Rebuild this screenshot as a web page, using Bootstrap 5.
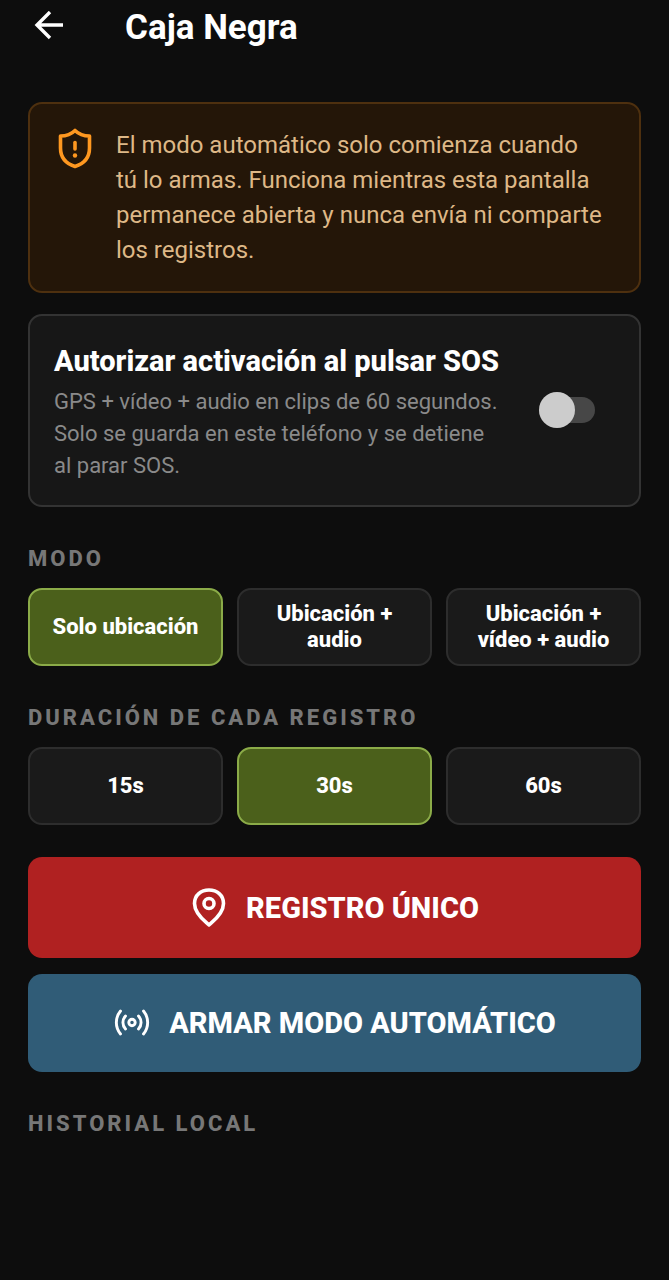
<!DOCTYPE html>
<html lang="es" data-bs-theme="dark">
<head>
<meta charset="utf-8">
<meta name="viewport" content="width=device-width, initial-scale=1">
<title>Caja Negra</title>
<link href="https://cdn.jsdelivr.net/npm/bootstrap@5.3.0/dist/css/bootstrap.min.css" rel="stylesheet">
<style>
  body { background: #0d0d0d; color: #fff; font-family: Roboto, "Liberation Sans", sans-serif; }
  .screen { padding: 0 28px 28px; }
  .topbar { height: 52px; gap: 55px; }
  .back { width: 42px; height: 42px; }
  .topbar h1 { font-size: 35px; line-height: 42px; padding-top: 3px; }
  .heavy { font-weight: 800; }
  .panel { border: 2px solid #333; border-radius: 14px; background: #171717; }
  .notice { background: #241608; border-color: #4e300f; color: #deb887; padding: 24px 26px 23px; gap: 22px; margin-top: 50px; font-size: 24px; line-height: 35px; }
  .sos { padding: 27px 24px 23px; margin-top: 21px; }
  .sos-title { font-size: 29px; line-height: 36px; }
  .sos-text { color: #8a8a8a; font-size: 22px; line-height: 32px; margin-top: 7px; }
  .form-check-input.toggle { width: 56px; height: 26px; margin: 0 20px 6px 0; border: 0; border-radius: 13px; background: #474747; appearance: none; position: relative; }
  .toggle::before { content: ""; position: absolute; left: 0; top: -5px; width: 36px; height: 36px; border-radius: 50%; background: #ccc; }
  .toggle:checked::before { left: auto; right: 0; }
  .group { margin-top: 38px; }
  .section-title { color: #777; font-size: 22px; line-height: 28px; letter-spacing: 3px; margin: 0 0 15px; }
  .options { gap: 14px; }
  .option { flex: 1 1 0; min-height: 78px; padding: 8px 20px; border: 2px solid #2d2d2d; border-radius: 14px; background: #1a1a1a; color: #fff; font-size: 22px; line-height: 26px; }
  .btn-check:checked + .option { background: #4b601b; border-color: #8bab48; color: #fff; }
  .actions { margin-top: 32px; }
  .action { border: 0; border-radius: 14px; color: #fff; font-size: 29px; line-height: 36px; padding: 31px 20px; gap: 18px; }
  .action-red, .action-red:hover { background: #b02121; color: #fff; }
  .action-blue, .action-blue:hover { background: #305c77; color: #fff; }
</style>
</head>
<body>
<div class="screen">
  <header class="topbar d-flex align-items-center">
    <button class="back btn p-0 border-0 d-flex align-items-center justify-content-center" type="button" aria-label="Volver">
      <svg width="30" height="30" viewBox="0 0 30 30" fill="none" stroke="#fff" stroke-width="3.400" aria-hidden="true"><path d="M29 14H3M16 1 3 14l13 13"/></svg>
    </button>
    <h1 class="fw-bold mb-0">Caja Negra</h1>
  </header>

  <main>
    <div class="panel notice d-flex align-items-start">
      <svg class="flex-shrink-0" width="38" height="44" viewBox="0 1 38 44" fill="none" stroke="#ff9820" stroke-width="3.600" stroke-linecap="round" stroke-linejoin="round" aria-hidden="true"><path d="M19 3.500C15 7.500 9.500 9 4.500 9V21C4.500 30.500 9.500 36.500 19 39.500C28.500 36.500 33.500 30.500 33.500 21V9C28.500 9 23 7.500 19 3.500Z"/><path d="M19 15.500v6.500"/><circle cx="19" cy="28.500" r="2.200" fill="#ff9820" stroke="none"/></svg>
      <p class="mb-0">El modo automático solo comienza cuando tú&nbsp;lo armas. Funciona mientras esta pantalla permanece abierta y nunca envía ni comparte los registros.</p>
    </div>

    <div class="panel sos d-flex align-items-center justify-content-between gap-4">
      <div>
        <label class="sos-title heavy d-block" for="sos">Autorizar activación al pulsar SOS</label>
        <p class="sos-text mb-0" id="sosText">GPS + vídeo + audio en clips de 60 segundos. Solo se guarda en este teléfono y se detiene al&nbsp;parar SOS.</p>
      </div>
      <input class="form-check-input toggle flex-shrink-0" type="checkbox" role="switch" id="sos" aria-describedby="sosText">
    </div>

    <section class="group" aria-labelledby="modo">
      <h2 class="section-title heavy" id="modo">MODO</h2>
      <div class="options d-flex" role="radiogroup" aria-labelledby="modo">
        <input class="btn-check" type="radio" name="modo" id="m1" checked>
        <label class="option btn heavy d-flex align-items-center justify-content-center" for="m1">Solo ubicación</label>
        <input class="btn-check" type="radio" name="modo" id="m2">
        <label class="option btn heavy d-flex align-items-center justify-content-center" for="m2">Ubicación + audio</label>
        <input class="btn-check" type="radio" name="modo" id="m3">
        <label class="option btn heavy d-flex align-items-center justify-content-center" for="m3">Ubicación + vídeo + audio</label>
      </div>
    </section>

    <section class="group" aria-labelledby="dur">
      <h2 class="section-title heavy" id="dur">DURACIÓN DE CADA REGISTRO</h2>
      <div class="options d-flex" role="radiogroup" aria-labelledby="dur">
        <input class="btn-check" type="radio" name="dur" id="d1">
        <label class="option btn heavy d-flex align-items-center justify-content-center" for="d1">15s</label>
        <input class="btn-check" type="radio" name="dur" id="d2" checked>
        <label class="option btn heavy d-flex align-items-center justify-content-center" for="d2">30s</label>
        <input class="btn-check" type="radio" name="dur" id="d3">
        <label class="option btn heavy d-flex align-items-center justify-content-center" for="d3">60s</label>
      </div>
    </section>

    <div class="actions d-grid gap-3">
      <button class="action action-red btn heavy d-flex align-items-center justify-content-center" type="button">
        <svg width="38" height="39" viewBox="0 0 38 39" fill="none" stroke="#fff" stroke-width="3.600" stroke-linejoin="round" aria-hidden="true"><path d="M19 37C15 33.500 4.500 26 4.500 15.500C4.500 7 11 2 19 2S33.500 7 33.500 15.500C33.500 26 23 33.500 19 37Z"/><circle cx="19" cy="15.500" r="5"/></svg>
        REGISTRO ÚNICO
      </button>
      <button class="action action-blue btn heavy d-flex align-items-center justify-content-center" type="button">
        <svg width="38" height="30" viewBox="0 0 38 30" fill="none" stroke="#fff" stroke-width="2.900" stroke-linecap="round" aria-hidden="true"><circle cx="19" cy="14.500" r="3.200"/><path d="M12.500 8a9.500 9.500 0 0 0 0 13M25.500 8a9.500 9.500 0 0 1 0 13M7.500 3a18 18 0 0 0 0 23M30.500 3a18 18 0 0 1 0 23"/></svg>
        ARMAR MODO AUTOMÁTICO
      </button>
    </div>

    <section class="group">
      <h2 class="section-title heavy">HISTORIAL LOCAL</h2>
    </section>
  </main>
</div>
<script src="https://cdn.jsdelivr.net/npm/bootstrap@5.3.0/dist/js/bootstrap.bundle.min.js"></script>
</body>
</html>
